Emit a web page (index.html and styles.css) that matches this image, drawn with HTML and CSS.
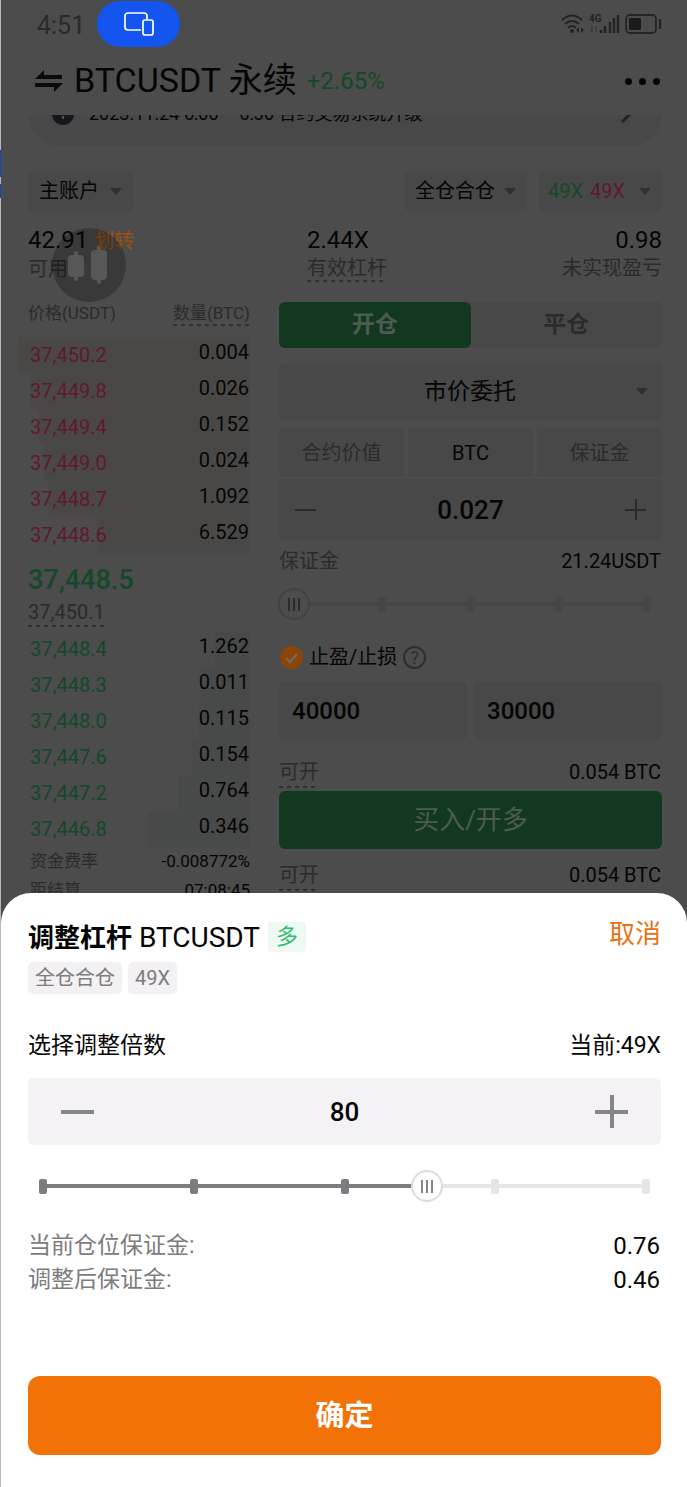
FILE: index.html
```html
<!DOCTYPE html>
<html lang="zh-CN">
<head>
  <meta charset="UTF-8">
  <meta name="viewport" content="width=device-width, initial-scale=1.0">
  <title>BTCUSDT 永续</title>
  <link rel="stylesheet" href="styles.css">
</head>
<body>
  <div class="edge"></div>
  <main class="screen">
    <div class="status-bar">
      <span class="time">4:51</span>
      <span class="cast-pill">
        <svg width="32" height="26" viewBox="0 0 32 26" fill="none" stroke="#fff" stroke-width="1.7">
          <path d="M24 8V5a3 3 0 0 0-3-3H5a3 3 0 0 0-3 3v11a3 3 0 0 0 3 3h13"/>
          <rect x="20" y="9" width="10" height="15" rx="2"/>
        </svg>
      </span>
      <span class="status-icons">
        <svg width="24" height="20" viewBox="0 0 24 20" fill="none" stroke="#242424" stroke-width="2">
          <path d="M1 6Q11 -3 21 6M4 10Q11 4 18 10M7 14Q11 10 15 14"/>
          <circle cx="11" cy="17" r="2" fill="#242424" stroke="none"/>
          <path d="M18 13v6l-3-3zM20 13v6l3-3z" fill="#242424" stroke="none"/>
        </svg>
        <svg width="32" height="20" viewBox="0 0 32 20">
          <text x="0" y="8" font-family="Roboto" font-size="10" font-weight="700" fill="#242424">4G</text>
          <path d="M3 12v6M7 12v6" stroke="#3a3a3a" stroke-width="1.5"/>
          <path d="M12 16v3M16 12v7M21 8v11M25 4v15M29 1v18" stroke="#242424" stroke-width="2.5"/>
        </svg>
        <svg width="37" height="20" viewBox="0 0 37 20" fill="none">
          <rect x="1" y="1" width="30" height="18" rx="4" stroke="#242424" stroke-width="1.8"/>
          <rect x="4" y="4" width="12" height="12" rx="1" fill="#1c1c1c"/>
          <path d="M35 5v10" stroke="#242424" stroke-width="2.5"/>
        </svg>
      </span>
    </div>

    <header class="header">
      <svg width="30" height="26" viewBox="0 0 30 26">
        <path d="M1 11 10 2v5h18v4H1zM29 15l-9 9v-5H1v-4z" fill="#0a0a0a"/>
      </svg>
      <h1>BTCUSDT 永续</h1>
      <span class="change">+2.65%</span>
      <button class="more" type="button" aria-label="更多"><i></i><i></i><i></i></button>
    </header>

    <div class="notice-clip">
      <div class="notice">
        <svg width="22" height="22" viewBox="0 0 22 22">
          <circle cx="11" cy="11" r="11" fill="#15171d"/>
          <path d="M11 5v6M11 13v3" stroke="#555" stroke-width="2"/>
        </svg>
        <span>2023.11.24 6:00 – 6:30 合约交易系统升级</span>
        <svg class="notice-close" width="20" height="20" viewBox="0 0 20 20">
          <path d="M4 -2 16 6 4 18" fill="none" stroke="#242424" stroke-width="3"/>
        </svg>
      </div>
    </div>

    <div class="filters">
      <div class="dropdown account">
        <select aria-label="账户"><option>主账户</option></select>
      </div>
      <div class="dropdown mode">
        <select aria-label="仓位模式"><option>全仓合仓</option></select>
      </div>
      <button class="dropdown leverage" type="button"><span class="up">49X</span> <span class="down">49X</span></button>
    </div>

    <div class="stats">
      <div>
        <div class="stat-value">42.91 <a href="#">划转</a></div>
        <div class="stat-label">可用</div>
      </div>
      <div>
        <div class="stat-value">2.44X</div>
        <div class="stat-label"><span class="dashed">有效杠杆</span></div>
      </div>
      <div>
        <div class="stat-value">0.98</div>
        <div class="stat-label">未实现盈亏</div>
      </div>
      <button class="chart-float" type="button" aria-label="K线">
        <svg width="42" height="38" viewBox="0 0 42 38" fill="#575757">
          <rect x="0" y="9" width="16" height="22" rx="4"/>
          <rect x="6" y="5" width="4" height="30" rx="2"/>
          <rect x="23" y="4" width="16" height="30" rx="4"/>
          <rect x="29" y="0" width="4" height="38" rx="2"/>
        </svg>
      </button>
    </div>

    <div class="trade">
      <section class="book">
        <div class="book-head">
          <span>价格(USDT)</span>
          <span class="dashed">数量(BTC)</span>
        </div>
        <div class="row ask" style="--depth: 100%"><span>37,450.2</span><b>0.004</b></div>
        <div class="row ask" style="--depth: 95%"><span>37,449.8</span><b>0.026</b></div>
        <div class="row ask" style="--depth: 91%"><span>37,449.4</span><b>0.152</b></div>
        <div class="row ask" style="--depth: 89%"><span>37,449.0</span><b>0.024</b></div>
        <div class="row ask" style="--depth: 87%"><span>37,448.7</span><b>1.092</b></div>
        <div class="row ask" style="--depth: 66%"><span>37,448.6</span><b>6.529</b></div>
        <div class="last-price">37,448.5</div>
        <div class="mark-price"><span class="dashed">37,450.1</span></div>
        <div class="row bid" style="--depth: 15%"><span>37,448.4</span><b>1.262</b></div>
        <div class="row bid" style="--depth: 21%"><span>37,448.3</span><b>0.011</b></div>
        <div class="row bid" style="--depth: 22%"><span>37,448.0</span><b>0.115</b></div>
        <div class="row bid" style="--depth: 25%"><span>37,447.6</span><b>0.154</b></div>
        <div class="row bid" style="--depth: 31%"><span>37,447.2</span><b>0.764</b></div>
        <div class="row bid" style="--depth: 44%"><span>37,446.8</span><b>0.346</b></div>
        <div class="funding"><span>资金费率</span><b>-0.008772%</b></div>
        <div class="funding"><span>距结算</span><b>07:08:45</b></div>
      </section>

      <section class="order">
        <div class="tabs">
          <button class="active" type="button">开仓</button>
          <button type="button">平仓</button>
        </div>
        <div class="dropdown order-type">
          <select aria-label="委托类型"><option>市价委托</option></select>
        </div>
        <div class="units">
          <button type="button">合约价值</button>
          <button class="active" type="button">BTC</button>
          <button type="button">保证金</button>
        </div>
        <div class="stepper">
          <button class="minus" type="button" aria-label="减少"></button>
          <input type="text" value="0.027" aria-label="数量">
          <button class="plus" type="button" aria-label="增加"></button>
        </div>
        <div class="line">
          <span>保证金</span>
          <b>21.24USDT</b>
        </div>
        <div class="slider">
          <div class="ticks"><i></i><i></i><i></i><i></i><i></i></div>
          <input type="range" min="0" max="100" value="0" aria-label="保证金比例">
        </div>
        <div class="tpsl">
          <input type="checkbox" id="tpsl" checked>
          <label for="tpsl">止盈/止损</label>
          <button class="help" type="button" aria-label="说明">?</button>
        </div>
        <div class="prices">
          <input type="text" value="40000" aria-label="止盈价">
          <input type="text" value="30000" aria-label="止损价">
        </div>
        <div class="line available">
          <span class="dashed">可开</span>
          <b>0.054 BTC</b>
        </div>
        <button class="buy" type="button">买入/开多</button>
        <div class="line available">
          <span class="dashed">可开</span>
          <b>0.054 BTC</b>
        </div>
      </section>
    </div>
  </main>

  <section class="sheet" role="dialog" aria-labelledby="sheet-title">
    <div class="sheet-head">
      <h2 id="sheet-title"><strong>调整杠杆</strong> BTCUSDT</h2>
      <span class="side">多</span>
      <button class="cancel" type="button">取消</button>
    </div>
    <div class="tags">
      <span>全仓合仓</span>
      <span>49X</span>
    </div>
    <div class="sheet-label">
      <label for="multiple">选择调整倍数</label>
      <span>当前:49X</span>
    </div>
    <div class="stepper">
      <button class="minus" type="button" aria-label="减少"></button>
      <input type="text" id="multiple" value="80">
      <button class="plus" type="button" aria-label="增加"></button>
    </div>
    <div class="slider">
      <div class="ticks"><i class="on"></i><i class="on"></i><i class="on"></i><i></i><i></i></div>
      <input type="range" min="1" max="125" value="80" aria-label="倍数" style="--fill: 63.7%">
    </div>
    <dl class="margins">
      <div><dt>当前仓位保证金:</dt><dd>0.76</dd></div>
      <div><dt>调整后保证金:</dt><dd>0.46</dd></div>
    </dl>
    <button class="confirm" type="button">确定</button>
  </section>
</body>
</html>
```
FILE: styles.css
```css
* {
  box-sizing: border-box;
}

body {
  display: grid;
  grid-template-columns: 1px minmax(0, 1fr);
  height: 100vh;
  margin: 0;
  overflow: hidden;
  background: #4c4c4c;
  color: #050505;
  font-family: Roboto, "Noto Sans CJK SC", sans-serif;
  font-size: 20px;
  line-height: 24px;
}

button, input, select {
  margin: 0;
  padding: 0;
  border: none;
  outline: none;
  background: none;
  color: inherit;
  font: inherit;
}

h1, h2, dl, dd {
  margin: 0;
  font-weight: 400;
}

b {
  font-weight: 400;
}

.edge {
  background: linear-gradient(#b8b8b8 150px, #1747c8 150px, #1747c8 177px, #b8b8b8 177px, #b8b8b8 184px, #1747c8 184px, #1747c8 198px, #b8b8b8 198px);
}

.screen {
  min-width: 0;
  padding: 0 25px 0 27px;
  overflow: hidden;
}

.up {
  color: #134829;
}

.down {
  color: #60182b;
}

.dashed {
  background: repeating-linear-gradient(90deg, #303030 0 4px, transparent 4px 8px) bottom / 100% 2px no-repeat;
}

/* status bar */
.status-bar {
  display: flex;
  align-items: center;
  height: 47px;
  padding-left: 9px;
}

.time {
  width: 60px;
  padding-top: 4px;
  color: #2a2a2a;
  font-size: 25px;
}

.cast-pill {
  display: flex;
  align-items: center;
  justify-content: center;
  width: 83px;
  height: 46px;
  border-radius: 23px;
  background: #1355ee;
}

.status-icons {
  display: flex;
  gap: 4px;
  margin-left: auto;
}

/* title */
.header {
  display: flex;
  align-items: center;
  height: 68px;
  padding-left: 6px;
}

.header h1 {
  margin: 0 10px 0 10px;
  padding-bottom: 3px;
  font-size: 34px;
  line-height: 40px;
}

.change {
  color: #134829;
  font-size: 24px;
}

.more {
  display: flex;
  gap: 7px;
  margin-left: auto;
  padding-right: 2px;
}

.more i {
  width: 7px;
  height: 7px;
  border-radius: 50%;
  background: #050505;
}

.notice-clip {
  display: flex;
  flex-direction: column;
  justify-content: flex-end;
  height: 31px;
  overflow: hidden;
}

.notice {
  display: flex;
  flex-shrink: 0;
  align-items: center;
  gap: 15px;
  height: 64px;
  padding: 0 24px;
  border-radius: 32px;
  background: #484848;
  font-size: 18px;
}

.notice-close {
  margin-left: auto;
}

/* account, mode, leverage */
.filters {
  display: flex;
  gap: 12px;
  margin-top: 25px;
}

.dropdown {
  display: flex;
  align-items: center;
  height: 40px;
  padding: 0 11px;
  border-radius: 4px;
  background: #484848;
}

.dropdown::after {
  content: "";
  border: 6px solid transparent;
  border-top: 7px solid #303030;
  border-bottom: none;
}

.dropdown select {
  flex: 1;
  min-width: 0;
  appearance: none;
}

.account {
  width: 105px;
  margin-right: auto;
}

.mode {
  width: 122px;
  padding-left: 10px;
}

.leverage {
  gap: 7px;
  width: 123px;
  padding: 0 11px 0 9px;
}

.leverage::after {
  margin-left: auto;
}

/* account numbers */
.stats {
  position: relative;
  display: grid;
  grid-template-columns: 279px 1fr auto;
  margin-top: 15px;
}

.stats > div:nth-child(3) {
  text-align: right;
}

.stat-value {
  font-size: 24px;
  line-height: 28px;
}

.stat-value a {
  color: #9c500c;
  font-size: 20px;
  text-decoration: none;
}

.stat-label {
  color: #2b2b2b;
  line-height: 28px;
}

.stat-label .dashed {
  display: inline-block;
}

.chart-float {
  position: absolute;
  top: 2px;
  left: 24px;
  display: flex;
  align-items: center;
  justify-content: center;
  width: 74px;
  height: 74px;
  border-radius: 50%;
  background: rgba(0, 0, 0, 0.25);
}

/* order book and order form */
.trade {
  display: grid;
  grid-template-columns: 222px minmax(0, 1fr);
  gap: 29px;
  margin-top: 19px;
}

.book-head {
  display: flex;
  justify-content: space-between;
  height: 35px;
  color: #2b2b2b;
  font-size: 17px;
  line-height: 22px;
}

.book-head .dashed {
  height: 24px;
}

.row {
  display: flex;
  align-items: center;
  justify-content: space-between;
  height: 36px;
  margin-left: -10px;
  padding: 0 1px 0 12px;
  background: linear-gradient(var(--bar), var(--bar)) right / var(--depth) 100% no-repeat;
}

.row b {
  padding-bottom: 6px;
}

.ask {
  --bar: #4a4846;
  color: #60182b;
}

.bid {
  --bar: #484a49;
  color: #134829;
}

.row b, .funding b {
  color: #050505;
}

.last-price {
  padding-top: 10px;
  color: #134829;
  font-size: 27px;
  font-weight: 500;
  line-height: 34px;
}

.mark-price {
  height: 34px;
  color: #2b2b2b;
}

.mark-price .dashed {
  display: inline-block;
  height: 30px;
  line-height: 30px;
}

.funding {
  display: flex;
  justify-content: space-between;
  padding-left: 2px;
  color: #2b2b2b;
  font-size: 17px;
  line-height: 29px;
}

.tabs {
  display: grid;
  grid-template-columns: 1fr 1fr;
  height: 46px;
  border-radius: 5px;
  background: #484848;
  color: #2b2b2b;
  font-size: 23px;
  font-weight: 700;
}

.tabs button {
  border-radius: 6px;
}

.tabs .active {
  background: #12391f;
  color: #4c5c50;
}

.order-type {
  height: 57px;
  margin-top: 15px;
  padding-right: 14px;
  font-size: 23px;
}

.order-type select {
  height: 40px;
  padding-left: 14px;
  text-align: center;
  text-align-last: center;
}

.units {
  display: grid;
  grid-template-columns: repeat(3, 1fr);
  gap: 4px;
  margin-top: 8px;
}

.units button {
  height: 49px;
  background: #484848;
  color: #2b2b2b;
}

.units .active {
  color: #050505;
}

.stepper {
  display: flex;
  align-items: center;
  height: 61px;
  margin-top: 2px;
  padding: 0 16px;
  background: #484848;
  font-size: 26px;
  font-weight: 500;
}

.stepper input {
  flex: 1;
  min-width: 0;
  text-align: center;
}

.minus, .plus {
  --icon: 21px;
  --stroke: 2px;
  --icon-color: #2a2a2a;
  width: var(--icon);
  height: var(--icon);
  background: linear-gradient(var(--icon-color), var(--icon-color)) center / 100% var(--stroke) no-repeat;
}

.plus {
  background:
    linear-gradient(var(--icon-color), var(--icon-color)) center / 100% var(--stroke) no-repeat,
    linear-gradient(var(--icon-color), var(--icon-color)) center / var(--stroke) 100% no-repeat;
}

.line {
  display: flex;
  justify-content: space-between;
  padding: 9px 1px 0 0;
}

.line span {
  color: #2b2b2b;
}

/* slider: ticks and input share one grid cell */
.slider {
  --track: #464646;
  --fill-color: #464646;
  --thumb: #4c4c4c;
  --thumb-border: #424242;
  --grip: #2b2b2b;
  display: grid;
  align-items: center;
  height: 32px;
  margin: 15px -1px 0;
}

.ticks, .slider input {
  grid-area: 1 / 1;
}

.ticks {
  display: flex;
  justify-content: space-between;
  padding: 0 12px;
}

.ticks i {
  width: 8px;
  height: 15px;
  border-radius: 2px;
  background: var(--track);
}

.ticks .on {
  background: var(--fill-color);
}

.slider input {
  width: 100%;
  height: 32px;
  appearance: none;
  background: linear-gradient(90deg, var(--fill-color) var(--fill, 0%), var(--track) var(--fill, 0%)) center / calc(100% - 32px) 4px no-repeat;
}

.slider input::-webkit-slider-thumb {
  width: 32px;
  height: 32px;
  border: 2px solid var(--thumb-border);
  border-radius: 50%;
  appearance: none;
  background:
    linear-gradient(90deg, var(--grip) 2px, transparent 2px 5px, var(--grip) 5px 7px, transparent 7px 10px, var(--grip) 10px) center / 12px 13px no-repeat,
    var(--thumb);
}

.tpsl {
  display: flex;
  align-items: center;
  gap: 6px;
  height: 24px;
  margin-top: 25px;
  padding-left: 1px;
}

.tpsl input {
  width: 23px;
  height: 23px;
  border-radius: 50%;
  appearance: none;
  background: #8a4508 url("data:image/svg+xml,%3Csvg xmlns='http://www.w3.org/2000/svg' viewBox='0 0 23 23'%3E%3Cpath d='M6 12l4 4 7-8' fill='none' stroke='%23746a62' stroke-width='2'/%3E%3C/svg%3E");
}

.help {
  width: 23px;
  height: 23px;
  border: 2px solid #2e2e2e;
  border-radius: 50%;
  color: #2e2e2e;
  font-size: 18px;
  line-height: 19px;
}

.prices {
  display: grid;
  grid-template-columns: 1fr 1fr;
  gap: 7px;
  margin-top: 13px;
}

.prices input {
  min-width: 0;
  height: 57px;
  padding: 0 13px;
  border-radius: 4px;
  background: #484848;
  font-size: 24px;
  font-weight: 500;
}

.available {
  height: 52px;
  padding: 21px 1px 3px 0;
}

.available .dashed {
  height: 28px;
}

.buy {
  width: 100%;
  height: 58px;
  border-radius: 6px;
  background: #12391f;
  color: #4c5c50;
  font-size: 26px;
}

.buy + .available {
  padding-top: 14px;
  height: 45px;
}

/* leverage sheet */
.sheet {
  position: fixed;
  right: 0;
  bottom: 0;
  left: 1px;
  padding: 26px 26px 32px 27px;
  border-radius: 30px 30px 0 0;
  background: #fff;
  color: #050505;
  font-size: 23px;
}

.sheet-head {
  display: flex;
  align-items: center;
  gap: 8px;
  height: 36px;
}

.sheet-head h2 {
  padding-top: 2px;
  font-size: 28px;
}

.sheet-head strong {
  font-size: 26px;
}

.side {
  padding: 0 8px;
  border-radius: 4px;
  background: #edf9f2;
  color: #2dbd6c;
  font-size: 22px;
  line-height: 30px;
}

.cancel {
  margin-left: auto;
  padding-bottom: 6px;
  color: #e87214;
  font-size: 26px;
}

.tags {
  display: flex;
  gap: 6px;
  margin-top: 7px;
  color: #7d7b7e;
  font-size: 20px;
  line-height: 32px;
}

.tags span {
  padding: 0 7px;
  border-radius: 5px;
  background: #f3f1f3;
}

.sheet-label {
  display: flex;
  justify-content: space-between;
  margin-top: 39px;
  line-height: 26px;
}

.sheet .stepper {
  height: 67px;
  margin-top: 19px;
  padding: 0 33px;
  border-radius: 5px;
  background: #f4f2f5;
}

.sheet .minus, .sheet .plus {
  --icon: 33px;
  --stroke: 4px;
  --icon-color: #868588;
}

.sheet .slider {
  --track: #e7e5e7;
  --fill-color: #7e7c80;
  --thumb: #fff;
  --thumb-border: #dedbde;
  --grip: #868588;
  margin-top: 25px;
}

.margins {
  margin-top: 27px;
  line-height: 34px;
}

.margins div {
  display: flex;
  justify-content: space-between;
}

.margins dt {
  color: #7d7b7e;
}

.margins dd {
  padding-right: 1px;
  font-size: 24px;
}

.confirm {
  width: 100%;
  height: 79px;
  margin-top: 79px;
  border-radius: 12px;
  background: #f27208;
  color: #fff;
  font-size: 29px;
  font-weight: 700;
}
```
